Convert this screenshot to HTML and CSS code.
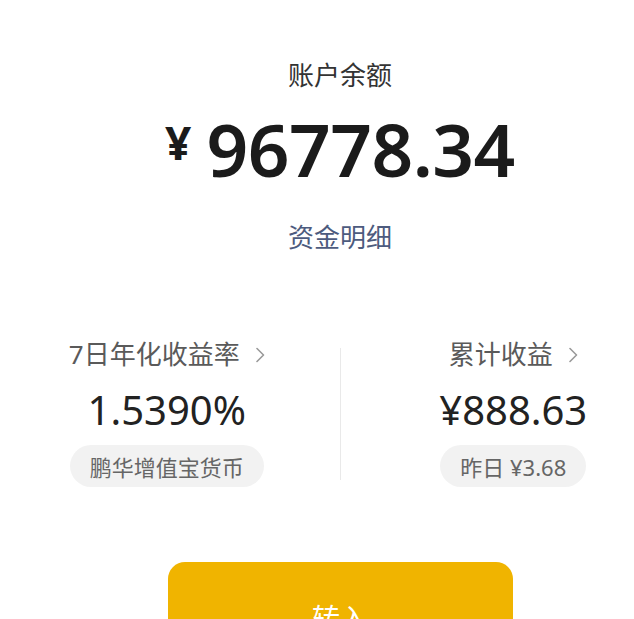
FILE: index.html
```html
<!DOCTYPE html>
<html lang="zh-CN">
<head>
<meta charset="utf-8">
<title>账户余额</title>
<link rel="stylesheet" href="styles.css">
</head>
<body>
<div class="page">
  <div class="label">账户余额</div>
  <div class="amount"><span class="yen">¥</span><span class="num">96778.34</span></div>
  <div class="detail">资金明细</div>

  <div class="stats">
    <div class="col col-left">
      <div class="col-title"><span>7日年化收益率</span><svg class="chev" width="9" height="16" viewBox="0 0 9 16"><path d="M1 1.5 L7.5 8 L1 14.5" fill="none" stroke="#9a9a9a" stroke-width="1.6" stroke-linecap="round" stroke-linejoin="round"/></svg></div>
      <div class="col-value">1.5390%</div>
      <div class="pill">鹏华增值宝货币</div>
    </div>
    <div class="divider"></div>
    <div class="col col-right">
      <div class="col-title"><span>累计收益</span><svg class="chev" width="9" height="16" viewBox="0 0 9 16"><path d="M1 1.5 L7.5 8 L1 14.5" fill="none" stroke="#9a9a9a" stroke-width="1.6" stroke-linecap="round" stroke-linejoin="round"/></svg></div>
      <div class="col-value">¥888.63</div>
      <div class="pill">昨日 ¥3.68</div>
    </div>
  </div>

  <div class="btn">转入</div>
</div>
</body>
</html>
```

FILE: styles.css
```css
html, body {
  margin: 0;
  padding: 0;
  overflow: hidden;
  background: #ffffff;
}
body {
  font-family: "Noto Sans", "Noto Sans CJK SC", sans-serif;
}
.page {
  width: 680px;
  padding-top: 61px;
  text-align: center;
}
.label {
  font-family: "Noto Sans CJK SC", sans-serif;
  font-size: 26px;
  line-height: 26px;
  color: #333333;
}
.amount {
  margin-top: 25px;
  display: flex;
  justify-content: center;
  align-items: flex-start;
  color: #1b1b1b;
  font-weight: 600;
}
.yen {
  font-size: 46px;
  line-height: 46px;
  margin-top: 7px;
  margin-right: 15px;
  font-weight: 700;
}
.num {
  font-size: 73px;
  line-height: 73px;
  letter-spacing: -0.5px;
}
.detail {
  margin-top: 38px;
  font-family: "Noto Sans CJK SC", sans-serif;
  font-size: 26px;
  line-height: 26px;
  color: #4d5b7e;
}
.stats {
  margin-top: 92px;
  display: grid;
  grid-template-columns: 1fr 1px 1fr;
}
.col {
  display: flex;
  flex-direction: column;
  align-items: center;
}
.col-left { padding-right: 6px; }
.col-right { padding-left: 6px; }
.col-title {
  display: flex;
  align-items: center;
  gap: 16px;
  font-size: 26px;
  line-height: 26px;
  color: #5a5a5a;
}
.chev { display: block; margin-top: 2px; }
.col-value {
  margin-top: 23px;
  font-size: 40px;
  line-height: 40px;
  color: #222222;
}
.pill {
  margin-top: 15px;
  height: 42px;
  padding: 0 20px;
  border-radius: 21px;
  background: #f2f2f2;
  display: flex;
  align-items: center;
  font-size: 22px;
  color: #666666;
}
.divider {
  margin-top: 7px;
  height: 132px;
  background: #e9e9e9;
}
.btn {
  margin: 75px auto 0;
  width: 345px;
  height: 110px;
  border-radius: 17px;
  background: #f0b400;
  color: #ffffff;
  font-family: "Noto Sans CJK SC", sans-serif;
  font-size: 28px;
  display: flex;
  align-items: center;
  justify-content: center;
}
```
